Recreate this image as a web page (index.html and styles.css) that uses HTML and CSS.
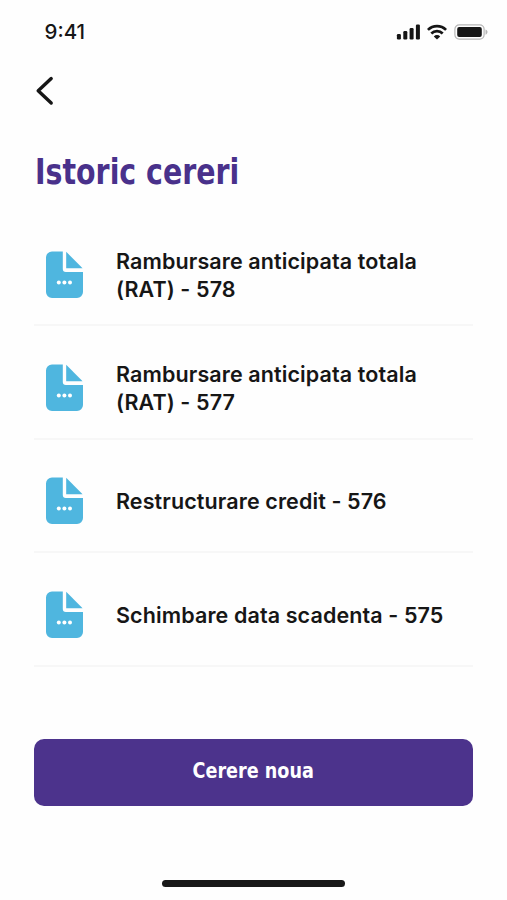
FILE: index.html
```html
<!DOCTYPE html>
<html lang="ro">
<head>
  <meta charset="UTF-8">
  <meta name="viewport" content="width=device-width, initial-scale=1.0">
  <title>Istoric cereri</title>
  <link rel="stylesheet" href="styles.css">
</head>
<body>
  <svg class="sprite" aria-hidden="true">
    <symbol id="icon-doc" viewBox="0 0 37 47">
      <path fill="#4fb6df" d="M6 0.5H16.8V18a3 3 0 0 0 3 3H37V41a6 6 0 0 1-6 6H6a6 6 0 0 1-6-6V6.5a6 6 0 0 1 6-6Z"/>
      <path fill="#4fb6df" d="M20.2 0.8 36.6 17.2H20.2Z"/>
      <circle fill="#fff" cx="12.8" cy="31.4" r="2"/>
      <circle fill="#fff" cx="18.4" cy="31.4" r="2"/>
      <circle fill="#fff" cx="24" cy="31.4" r="2"/>
    </symbol>
  </svg>

  <div class="screen">
    <div class="status-bar">
      <span class="time">9:41</span>
      <div class="status-icons">
        <svg width="24" height="16" viewBox="0 0 24 16" fill="#161616">
          <rect x="0.9" y="10" width="4" height="5.5" rx="1.2"/>
          <rect x="7.3" y="7" width="4" height="8.5" rx="1.2"/>
          <rect x="13.6" y="4" width="4" height="11.5" rx="1.2"/>
          <rect x="19.9" y="0.5" width="4" height="15" rx="1.2"/>
        </svg>
        <svg width="20" height="16" viewBox="0 0 20 16" fill="none" stroke="#161616" stroke-width="2.7">
          <path d="M0.9 5.9a12.9 12.9 0 0 1 18.2 0"/>
          <path d="M4.3 9.5a8.1 8.1 0 0 1 11.4 0"/>
          <path fill="#161616" stroke="none" d="M10 15.6 6.8 12.4a4.5 4.5 0 0 1 6.4 0Z"/>
        </svg>
        <svg width="34" height="16" viewBox="0 0 34 16">
          <rect x="0.9" y="0.9" width="29.2" height="14.2" rx="4.3" fill="none" stroke="#b5b5b5" stroke-width="1.2"/>
          <rect x="3.2" y="3" width="24.6" height="10" rx="2" fill="#161616"/>
          <path fill="#b5b5b5" d="M31.5 5.5c1.3 0.5 2 1.4 2 2.6s-0.7 2.1-2 2.6Z"/>
        </svg>
      </div>
    </div>

    <a class="back" href="#" aria-label="Inapoi">
      <svg width="20" height="30" viewBox="0 0 20 30" fill="none" stroke="#161616" stroke-width="3.4" stroke-linecap="round" stroke-linejoin="round">
        <path d="M17.2 2.6 4.2 14.8 17.2 27"/>
      </svg>
    </a>

    <h1>Istoric cereri</h1>

    <ul class="requests">
      <li class="request">
        <svg class="doc"><use href="#icon-doc"/></svg>
        <span>Rambursare anticipata totala (RAT) - 578</span>
      </li>
      <li class="request">
        <svg class="doc"><use href="#icon-doc"/></svg>
        <span>Rambursare anticipata totala (RAT) - 577</span>
      </li>
      <li class="request">
        <svg class="doc"><use href="#icon-doc"/></svg>
        <span>Restructurare credit - 576</span>
      </li>
      <li class="request">
        <svg class="doc"><use href="#icon-doc"/></svg>
        <span>Schimbare data scadenta - 575</span>
      </li>
    </ul>

    <button class="new-request"><span class="label">Cerere noua</span></button>

    <div class="home-indicator"></div>
  </div>
</body>
</html>
```

FILE: styles.css
```css
* {
  box-sizing: border-box;
}
body {
  margin: 0;
  background-color: #fefefe;
  color: #161616;
  font-family: Inter, "Liberation Sans", sans-serif;
}
.sprite {
  display: none;
}
.screen {
  display: flex;
  flex-direction: column;
  height: 900px;
  padding: 0 34px;
}
.status-bar {
  display: flex;
  justify-content: space-between;
  align-items: center;
  height: 63px;
  margin-right: -15px;
  padding-left: 10.5px;
}
.time {
  font-size: 20.5px;
  font-weight: 500;
}
.status-icons {
  display: flex;
  align-items: center;
  gap: 7px;
}
.status-icons svg {
  display: block;
}
.back {
  height: 30px;
  margin-top: 13px;
}
.back svg {
  display: block;
}
h1 {
  width: max-content;
  margin: 42px 0 0 1px;
  color: #49318b;
  font-family: "DejaVu Sans Condensed", "DejaVu Sans", sans-serif;
  font-size: 35.5px;
  font-weight: 700;
  font-stretch: condensed;
  line-height: 48px;
  transform: scaleX(0.89);
  transform-origin: left;
}
.requests {
  list-style: none;
  margin: 17px 0 0;
  padding: 0;
}
.request {
  display: flex;
  align-items: center;
  height: 113.4px;
  padding: 12px 12px 0;
  border-bottom: 2px solid #f7f7f7;
  font-size: 21.5px;
  font-weight: 600;
  letter-spacing: 0.11px;
  line-height: 28px;
}
.doc {
  flex: none;
  width: 37px;
  height: 47px;
  margin: 0 33px 1px 0;
}
.new-request {
  width: 439px;
  height: 67px;
  margin-top: 72px;
  padding: 0 0 4px;
  border: none;
  border-radius: 10px;
  background-color: #4c338c;
  color: #fff;
  font-family: "DejaVu Sans Condensed", "DejaVu Sans", sans-serif;
  font-size: 22px;
  font-weight: 700;
  font-stretch: condensed;
}
.label {
  display: inline-block;
  transform: scaleX(0.89);
}
.home-indicator {
  align-self: center;
  width: 183px;
  height: 7px;
  margin: auto 0 13px;
  border-radius: 4px;
  background-color: #181818;
}
```
